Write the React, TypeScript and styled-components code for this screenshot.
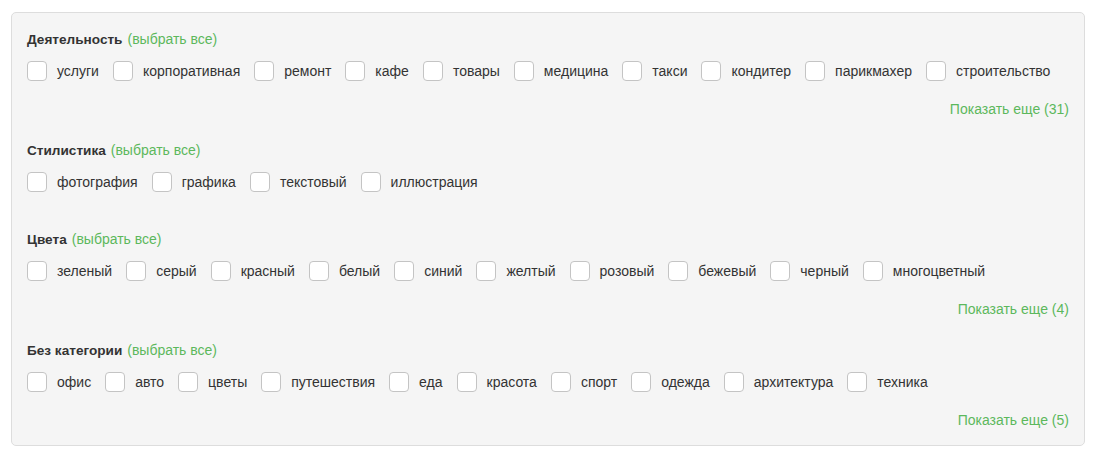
import React from "react";
import styled, { createGlobalStyle } from "styled-components";

const Global = createGlobalStyle`
  html, body { margin: 0; padding: 0; background: #ffffff; }
  body { font-family: "Liberation Sans", Arial, sans-serif; font-size: 14px; color: #333333; }
`;

const Page = styled.div`
  padding: 12px 14px 0 11px;
`;

const Panel = styled.div`
  background: #f5f5f5;
  border: 1px solid #dddddd;
  border-radius: 5px;
  padding: 17px 15px 16px 15px;
  display: flex;
  flex-direction: column;
  gap: 23px;
`;

const Section = styled.section`
  display: flex;
  flex-direction: column;
`;

const Title = styled.div`
  line-height: 18px;
  margin-bottom: 12px;
  font-weight: bold;
  font-size: 13.6px;
  color: #333333;
`;

const SelectAll = styled.a`
  font-weight: normal;
  font-size: 14px;
  color: #5cb85c;
  cursor: pointer;
  margin-left: 5px;
`;

const Row = styled.div`
  display: flex;
  flex-wrap: wrap;
  align-items: center;
  column-gap: 14px;
  margin-bottom: 15px;
`;

const Item = styled.label`
  display: flex;
  align-items: center;
  gap: 10px;
  line-height: 20px;
  cursor: pointer;
  color: #333333;
`;

const Box = styled.span`
  width: 18px;
  height: 18px;
  background: #ffffff;
  border: 1px solid #c4c4c4;
  border-radius: 4px;
  flex: none;
`;

const More = styled.div`
  margin-top: 4px;
  line-height: 18px;
  text-align: right;
  color: #5cb85c;
  cursor: pointer;
`;

type Group = { title: string; items: string[]; more?: number };

const groups: Group[] = [
  {
    title: "Деятельность",
    items: ["услуги", "корпоративная", "ремонт", "кафе", "товары", "медицина", "такси", "кондитер", "парикмахер", "строительство"],
    more: 31,
  },
  {
    title: "Стилистика",
    items: ["фотография", "графика", "текстовый", "иллюстрация"],
  },
  {
    title: "Цвета",
    items: ["зеленый", "серый", "красный", "белый", "синий", "желтый", "розовый", "бежевый", "черный", "многоцветный"],
    more: 4,
  },
  {
    title: "Без категории",
    items: ["офис", "авто", "цветы", "путешествия", "еда", "красота", "спорт", "одежда", "архитектура", "техника"],
    more: 5,
  },
];

export default function App() {
  return (
    <>
      <Global />
      <Page>
        <Panel>
          {groups.map((g) => (
            <Section key={g.title}>
              <Title>
                {g.title}
                <SelectAll>(выбрать все)</SelectAll>
              </Title>
              <Row>
                {g.items.map((it) => (
                  <Item key={it}>
                    <Box />
                    {it}
                  </Item>
                ))}
              </Row>
              {g.more !== undefined && <More>Показать еще ({g.more})</More>}
            </Section>
          ))}
        </Panel>
      </Page>
    </>
  );
}
